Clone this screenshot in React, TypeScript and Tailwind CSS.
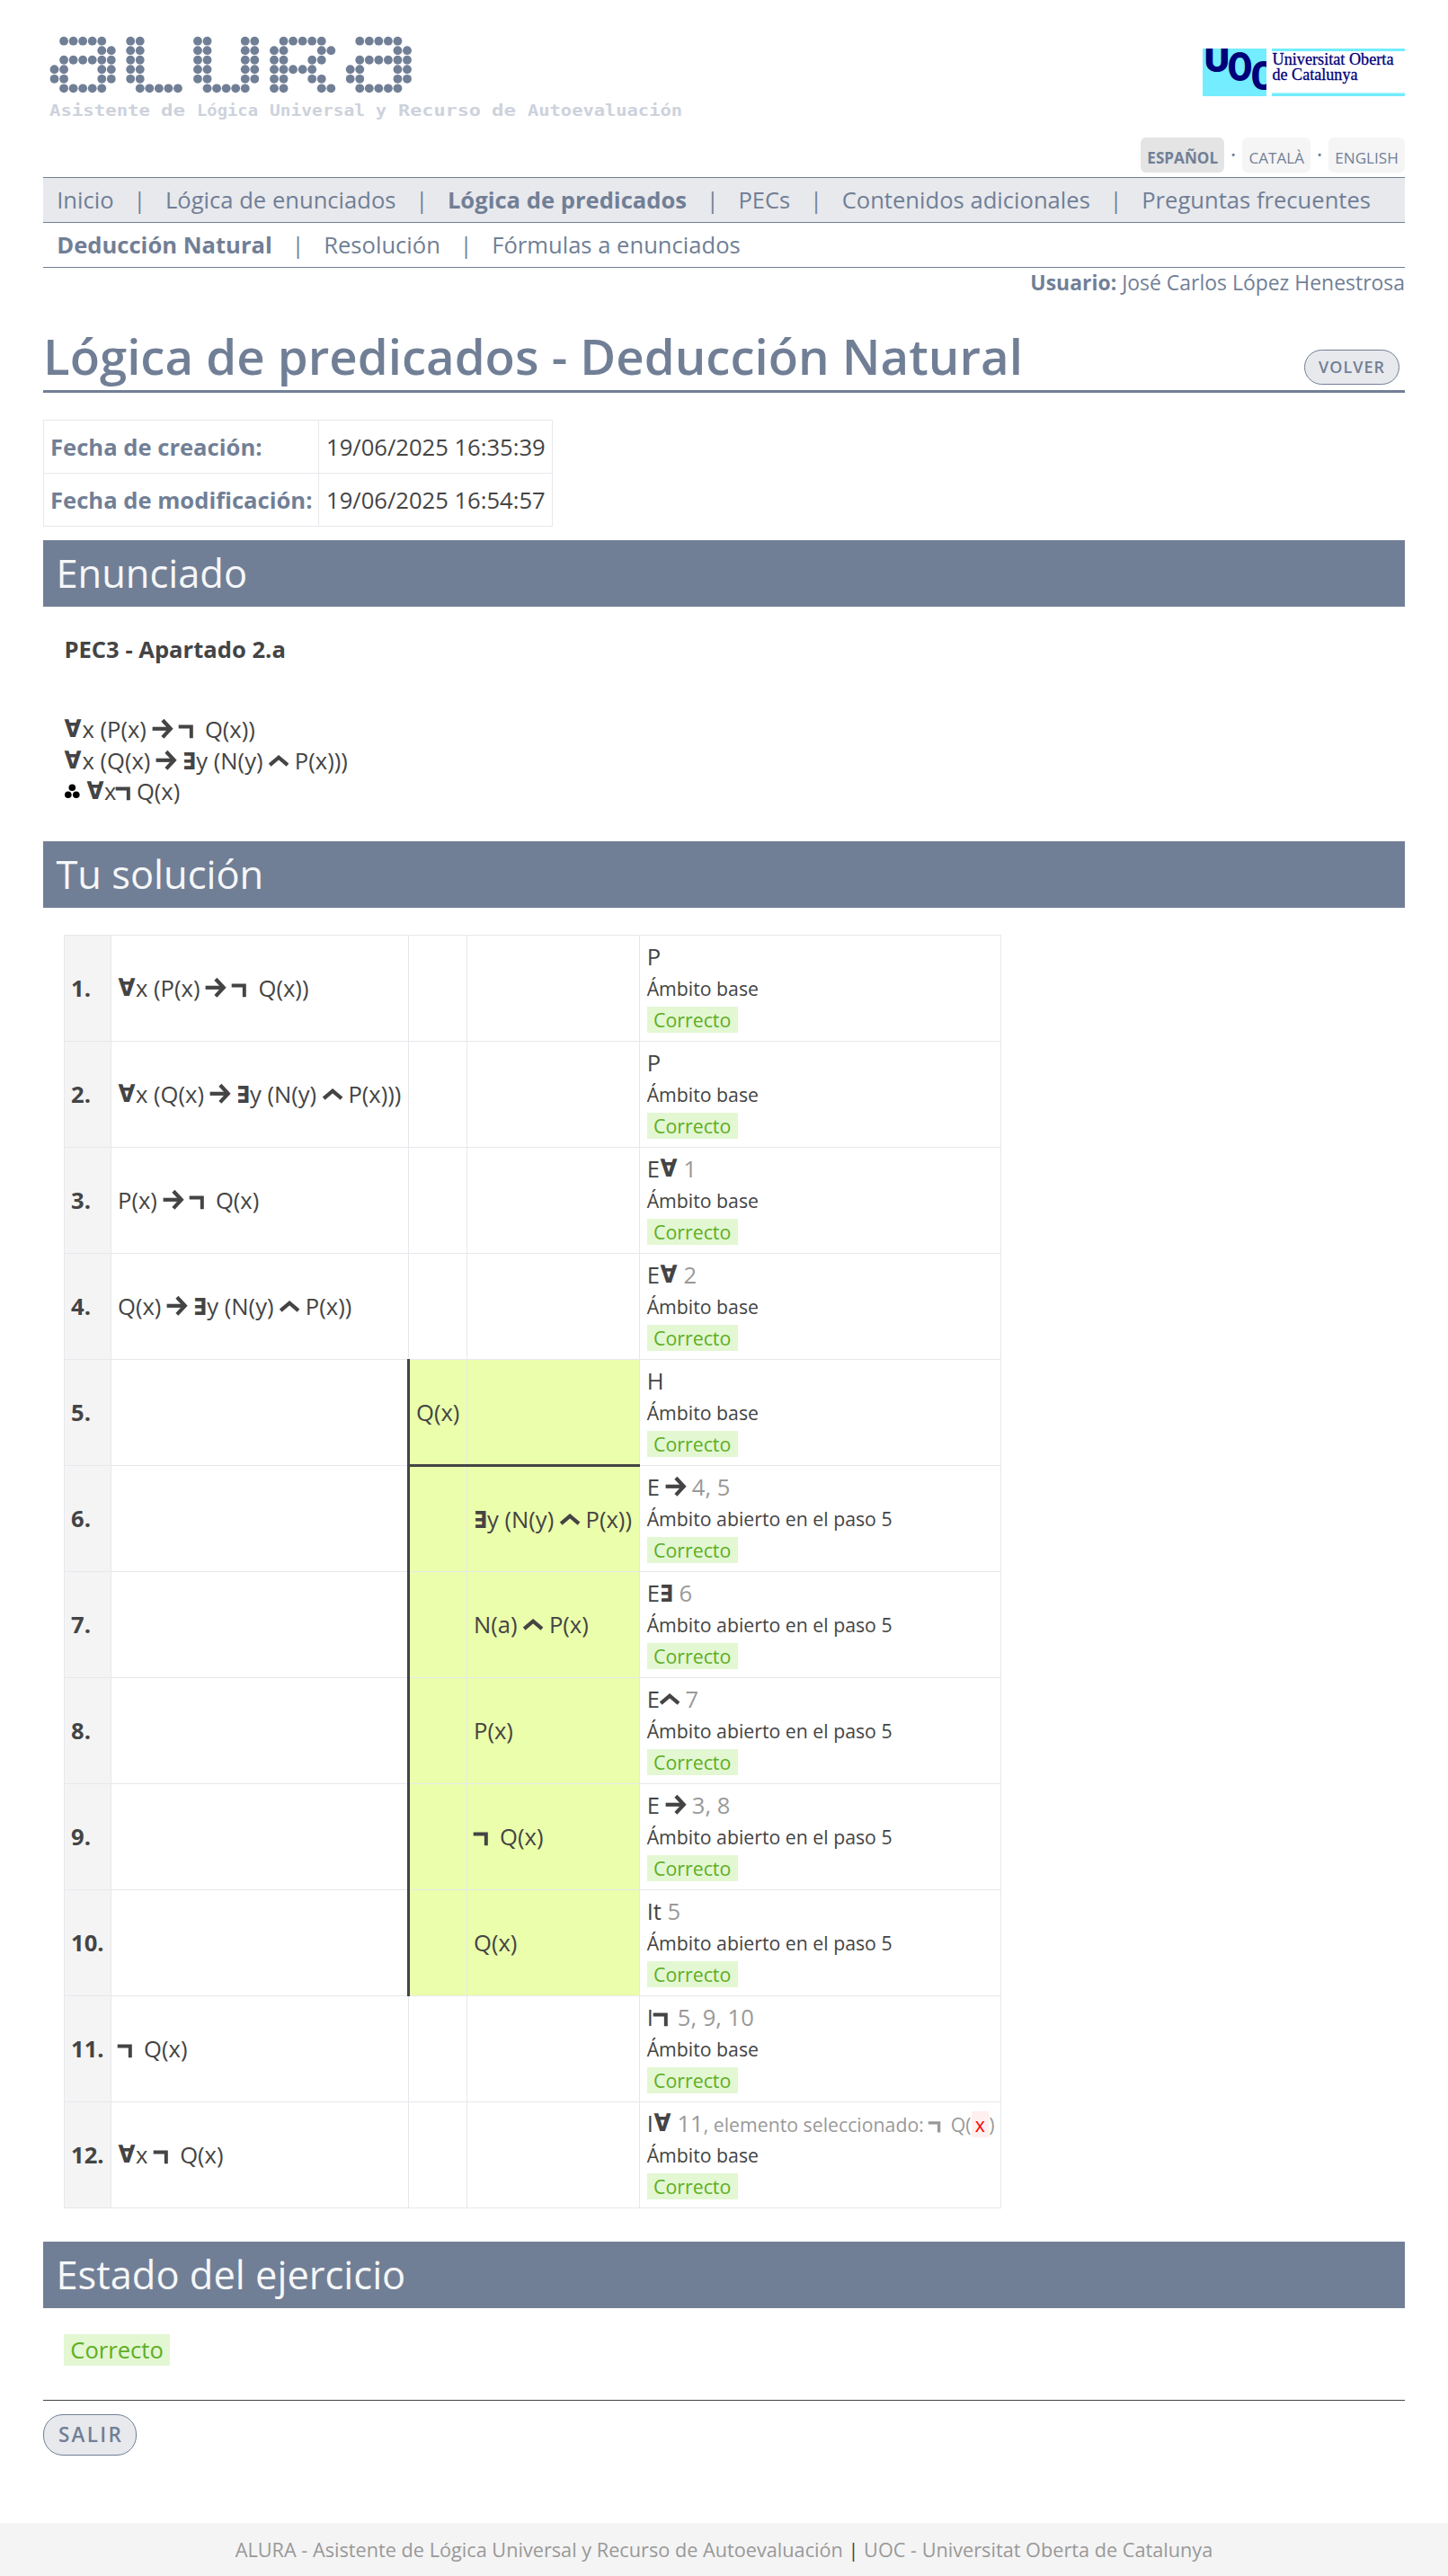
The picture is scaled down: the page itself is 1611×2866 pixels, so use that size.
import React from "react";
import type { ReactNode } from "react";

const LOGO_LETTERS: { x: number; rows: string[] }[] = [
  { x: 10.5, rows: [".#####.", ".....##", ".######", "##...##", "##...##", ".#####."] },
  { x: 95.2, rows: ["##....", "##....", "##....", "##....", "##....", ".#####"] },
  { x: 170, rows: ["##...##", "##...##", "##...##", "##...##", "##...##", ".#####."] },
  { x: 255, rows: [".#####.", "##...##", "##..##.", "#####..", "##..##.", "##...##"] },
  { x: 339.7, rows: [".#####.", ".....##", ".######", "##...##", "##...##", ".#####."] },
];

const TAGLINE: [string, number, number][] = [
  ["Asistente", 5, 112],
  ["de", 129, 27],
  ["Lógica", 169, 68],
  ["Universal", 250, 106],
  ["y", 368, 12],
  ["Recurso", 393, 92],
  ["de", 497, 27],
  ["Autoevaluación", 537, 172],
];

function AluraLogo() {
  return (
    <svg width="720" height="110" viewBox="0 0 720 110" className="block" role="img" aria-label="ALURA">
      <g fill="#717f96">
        {LOGO_LETTERS.flatMap((letter, l) =>
          letter.rows.flatMap((row, r) =>
            row.split("").map((cell, c) =>
              cell === "#" ? (
                <circle key={`${l}-${r}-${c}`} cx={letter.x + c * 10.55} cy={15.7 + r * 10.52} r={4.9} />
              ) : null,
            ),
          ),
        )}
      </g>
      <g fill="#cdd2dc" fontFamily="'DejaVu Sans Mono'" fontWeight="700" fontSize="18.5">
        {TAGLINE.map(([word, x, w]) => (
          <text key={x} x={x} y={99.3} textLength={w} lengthAdjust="spacingAndGlyphs">
            {word}
          </text>
        ))}
      </g>
    </svg>
  );
}

function UocLogo() {
  return (
    <svg width="225" height="53" viewBox="0 0 225 53" className="block overflow-hidden">
      <svg width="71" height="53" viewBox="0 0 71 53">
        <rect width="71" height="53" fill="#73edff" />
        <g fill="#000078" fontFamily="Roboto" fontWeight="900" fontSize="43.5">
          <text x="1.6" y="25.5" textLength="28.8" lengthAdjust="spacingAndGlyphs">U</text>
          <text x="27.7" y="35.5" textLength="27.6" lengthAdjust="spacingAndGlyphs">O</text>
          <text x="53.8" y="45.7" textLength="27.6" lengthAdjust="spacingAndGlyphs">C</text>
        </g>
      </svg>
      <rect x="77" width="148" height="3" fill="#73edff" />
      <rect x="77" y="49.5" width="148" height="3.5" fill="#73edff" />
      <g fill="#000078" stroke="#000078" strokeWidth="0.3" fontFamily="'Liberation Serif'" fontSize="19">
        <text x="77.5" y="18" textLength="135" lengthAdjust="spacingAndGlyphs">Universitat Oberta</text>
        <text x="77.5" y="35" textLength="95" lengthAdjust="spacingAndGlyphs">de Catalunya</text>
      </g>
    </svg>
  );
}

/* Logic symbols: 24px tall inline boxes whose text baseline lies at y = 22. */
function ForAll() {
  return (
    <svg width="20" height="24" viewBox="0 0 20 24" className="inline-block overflow-visible align-[-2px]">
      <text x="0.4" y="21" fill="currentColor" fontFamily="'DejaVu Sans'" fontWeight="700" fontSize="27" textLength="19" lengthAdjust="spacingAndGlyphs">∀</text>
    </svg>
  );
}
function Exists() {
  return (
    <svg width="15" height="24" viewBox="0 0 15 24" className="inline-block overflow-visible align-[-2px]">
      <text x="0" y="22" fill="currentColor" fontFamily="'DejaVu Sans'" fontWeight="700" fontSize="26" textLength="15" lengthAdjust="spacingAndGlyphs">∃</text>
    </svg>
  );
}
function Implies() {
  return (
    <svg width="22.6" height="24" viewBox="0 0 22.6 24" className="inline-block overflow-visible align-[-2px]" fill="none" stroke="currentColor" strokeWidth="4.2">
      <path d="M-0.4 11.8H19.2" />
      <path d="M10.9 2.2L19.8 11.8L10.9 21.4" strokeLinejoin="miter" />
    </svg>
  );
}
function And() {
  return (
    <svg width="22" height="24" viewBox="0 0 22 24" className="inline-block overflow-visible align-[-2px]" fill="none" stroke="currentColor" strokeWidth="4.2">
      <path d="M1.2 17.2L11.1 8.7L21 17.2" />
    </svg>
  );
}
function Not({ small = false }: { small?: boolean }) {
  return (
    <svg
      width={small ? 13.3 : 15.8}
      height={small ? 20 : 24}
      viewBox="0 0 16 24"
      className={small ? "inline-block overflow-visible align-[-1.7px]" : "inline-block overflow-visible align-[-2px]"}
      fill="none"
      stroke="currentColor"
      strokeWidth="4"
    >
      <path d="M-0.3 9.5H14V22.3" />
    </svg>
  );
}

const NB = "\u00a0";

function NavBar({ items, active }: { items: string[]; active: string }) {
  return (
    <nav className="flex h-[49px] items-center pl-[15.2px] leading-[49px]">
      {items.map((item, i) => (
        <React.Fragment key={item}>
          {i > 0 && <span className="mx-[21.65px]">|</span>}
          <a className={item === active ? "font-bold" : ""}>{item}</a>
        </React.Fragment>
      ))}
    </nav>
  );
}

function SectionTitle({ children }: { children: ReactNode }) {
  return (
    <h2 className="h-[74px] bg-[#717f96] pl-[14.4px] text-[43.45px] leading-[74.4px] text-[#f6f7f8]">{children}</h2>
  );
}

function Correct() {
  return <span className="bg-[#e3f7d3] px-[7.3px] text-[#5fae22]">Correcto</span>;
}

type Step = { a?: ReactNode; b?: ReactNode; c?: ReactNode; rule: ReactNode; scope?: boolean; open?: boolean };

const Ref = ({ children }: { children: ReactNode }) => <span className="text-[#999]">{children}</span>;

const STEPS: Step[] = [
  { a: <><ForAll />x (P(x) <Implies /> <Not /> {NB}Q(x))</>, rule: "P" },
  { a: <><ForAll />x (Q(x) <Implies /> <Exists />y (N(y) <And /> P(x)))</>, rule: "P" },
  { a: <>P(x) <Implies /> <Not /> {NB}Q(x)</>, rule: <>E<ForAll /> <Ref>1</Ref></> },
  { a: <>Q(x) <Implies /> <Exists />y (N(y) <And /> P(x))</>, rule: <>E<ForAll /> <Ref>2</Ref></> },
  { b: "Q(x)", rule: "H", open: true },
  { c: <><Exists />y (N(y) <And /> P(x))</>, rule: <>E <Implies /> <Ref>4, 5</Ref></>, scope: true },
  { c: <>N(a) <And /> P(x)</>, rule: <>E<Exists /> {" "}<Ref>6</Ref></>, scope: true },
  { c: "P(x)", rule: <>E<And /> <Ref>7</Ref></>, scope: true },
  { c: <><Not /> {NB}Q(x)</>, rule: <>E <Implies /> <Ref>3, 8</Ref></>, scope: true },
  { c: "Q(x)", rule: <>It <Ref>5</Ref></>, scope: true },
  { a: <><Not /> {NB}Q(x)</>, rule: <>I<Not /> <Ref><span className="pl-[4.5px]">5, 9, 10</span></Ref></> },
  {
    a: <><ForAll />x <Not /> {NB}Q(x)</>,
    rule: (
      <>
        I<ForAll />{" "}
        <Ref>
          11
          <span className="text-[21.28px] leading-none">
            , elemento seleccionado: <Not small /> {NB}Q(
            <span className="bg-[#ffefef] px-[4.3px] text-[#ff0000]">x</span>)
          </span>
        </Ref>
      </>
    ),
  },
];

const CELL = "border border-[#e7e8ec] align-middle whitespace-nowrap";
const TEXT_CELL = CELL + " pt-[1.6px] pr-0 pb-0 pl-[7px]";
const BUTTON = "rounded-[22px] border border-[#717f96] bg-[#e8e9ed] font-semibold text-[#717f96]";

function StepRow({ step, n }: { step: Step; n: number }) {
  const inScope = step.scope || step.open;
  const scopeStart = inScope ? " bg-[#ebfeab] border-l-[3px] border-l-[#444]" : "";
  const scopeFill = inScope ? " bg-[#ebfeab]" : "";
  const line = step.open ? " border-b-[3px] border-b-[#444]" : "";
  return (
    <tr className="h-[118px]">
      <th className={TEXT_CELL + " bg-[#f4f4f4] text-left font-bold"}>{n}.</th>
      <td className={TEXT_CELL}>{step.a}</td>
      <td className={TEXT_CELL + scopeStart + line}>{step.b}</td>
      <td className={TEXT_CELL + scopeFill + line}>{step.c}</td>
      <td className={CELL + " px-[7.68px] py-0 leading-[34.4px]"}>
        <div>{step.rule}</div>
        <div>
          <span className="text-[21.28px] leading-none">{step.scope ? "Ámbito abierto en el paso 5" : "Ámbito base"}</span>
        </div>
        <div>
          <span className="text-[21.33px] leading-none"><Correct /></span>
        </div>
      </td>
    </tr>
  );
}

export default function App() {
  return (
    <div className="flex h-[2866px] w-[1611px] flex-col bg-white font-['Open_Sans',sans-serif] text-[25.6px] leading-[34.56px] text-[#444]">
      <div className="mx-12 flex-1">
        <header className="text-[#717f96]">
          <div className="flex h-[197px] justify-between">
            <div className="ml-[2px] pt-[30px]"><AluraLogo /></div>
            <div className="flex flex-col items-end pt-[54px]">
              <UocLogo />
              <div className="mt-[46px] flex h-[39px] text-[17.1px] leading-[45.4px]">
                <span className="rounded-[6px] bg-[#e4e4e4] px-[7.2px] font-bold">ESPAÑOL</span>
                <span className="w-5 text-center text-[25.6px] leading-[38.6px]">·</span>
                <span className="rounded-[6px] bg-[#f5f5f5] px-[7.2px]">CATALÀ</span>
                <span className="w-5 text-center text-[25.6px] leading-[38.6px]">·</span>
                <span className="rounded-[6px] bg-[#f5f5f5] px-[7.2px]">ENGLISH</span>
              </div>
            </div>
          </div>
          <div className="border-y border-[#717f96] bg-[#e8e9ed]">
            <NavBar
              items={["Inicio", "Lógica de enunciados", "Lógica de predicados", "PECs", "Contenidos adicionales", "Preguntas frecuentes"]}
              active="Lógica de predicados"
            />
          </div>
          <div className="border-b border-[#717f96]">
            <NavBar items={["Deducción Natural", "Resolución", "Fórmulas a enunciados"]} active="Deducción Natural" />
          </div>
          <p className="text-right text-[22.95px] leading-[33px]">
            <b>Usuario:</b> José Carlos López Henestrosa
          </p>
        </header>

        <div className="mt-[28px] flex h-[78px] justify-between border-b-[3px] border-[#717f96]">
          <h1 className="text-[54.55px] leading-[75px] font-semibold text-[#717f96]">Lógica de predicados - Deducción Natural</h1>
          <button className={BUTTON + " mt-[30px] mr-[6px] h-[39px] w-[106px] text-[18px] leading-[37px] tracking-[1px]"}>VOLVER</button>
        </div>

        <table className="mt-[30px] h-[119px] w-[567px] table-fixed border-collapse">
          <colgroup><col className="w-[306px]" /><col className="w-[260px]" /></colgroup>
          <tbody>
            {[["Fecha de creación:", "19/06/2025 16:35:39"], ["Fecha de modificación:", "19/06/2025 16:54:57"]].map(([k, v]) => (
              <tr key={k} className="h-[59px]">
                <th className={TEXT_CELL + " text-left font-bold text-[#717f96]"}>{k}</th>
                <td className={CELL + " pt-[1.6px] pr-0 pb-0 pl-2"}>{v}</td>
              </tr>
            ))}
          </tbody>
        </table>

        <section className="mt-[15px] h-[335px]">
          <SectionTitle>Enunciado</SectionTitle>
          <div className="pt-[30.8px] pl-[23.4px]">
            <p className="font-bold">PEC3 - Apartado 2.a</p>
            <div className="mt-[55px]">
              <p><ForAll />x (P(x) <Implies /> <Not /> {NB}Q(x))</p>
              <p><ForAll />x (Q(x) <Implies /> <Exists />y (N(y) <And /> P(x)))</p>
              <p>
                <svg width="18" height="24" viewBox="0 0 18 24" className="inline-block align-[-2px]" fill="#000">
                  <circle cx="9.3" cy="8.3" r="3.8" />
                  <circle cx="4.8" cy="16.3" r="3.8" />
                  <circle cx="13.8" cy="16.3" r="3.8" />
                </svg>{" "}
                <ForAll />x<Not /> Q(x)
              </p>
            </div>
          </div>
        </section>

        <section className="h-[1558px]">
          <SectionTitle>Tu solución</SectionTitle>
          <table className="mt-[30px] ml-[23px] w-[1043px] table-fixed border-collapse">
            <colgroup>
              <col className="w-[52px]" />
              <col className="w-[331px]" />
              <col className="w-[65px]" />
              <col className="w-[192px]" />
              <col className="w-[402px]" />
            </colgroup>
            <tbody>
              {STEPS.map((s, i) => <StepRow key={i} step={s} n={i + 1} />)}
            </tbody>
          </table>
        </section>

        <section>
          <SectionTitle>Estado del ejercicio</SectionTitle>
          <p className="pt-[30px] pl-[23px]"><Correct /></p>
          <div className="mt-[37.4px] border-t border-[#444] pt-[15px]">
            <button className={BUTTON + " block h-[46px] w-[104px] pl-[2px] text-[22.5px] leading-[44px] tracking-[2.3px]"}>SALIR</button>
          </div>
        </section>
      </div>
      <footer className="h-[59px] bg-[#f4f4f4] text-center text-[21.7px] leading-[59px] text-[#999]">
        ALURA - Asistente de Lógica Universal y Recurso de Autoevaluación <span className="text-[#444]">|</span> UOC - Universitat Oberta de Catalunya
      </footer>
    </div>
  );
}
